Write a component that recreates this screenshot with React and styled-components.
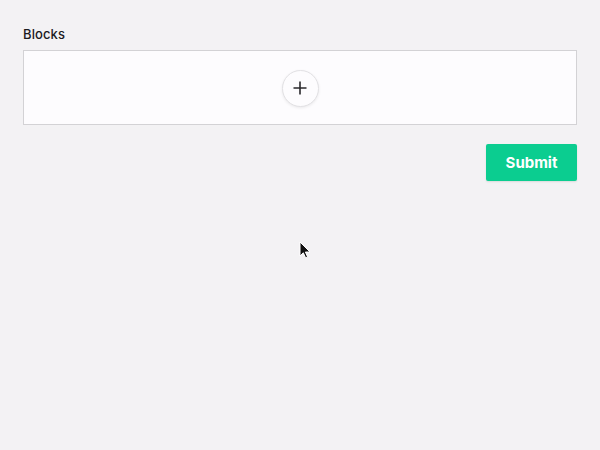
import styled, { createGlobalStyle } from 'styled-components'

const GlobalStyle = createGlobalStyle`
    html, body {
        margin: 0;
        padding: 0;
        background: #f3f2f4;
        font-family: Inter, 'Noto Sans', sans-serif;
        color: #1c1b1f;
    }
`

const Page = styled.div`
    position: relative;
    width: 600px;
    height: 450px;
    box-sizing: border-box;
    padding: 26px 23px 0 23px;
    display: flex;
    flex-direction: column;
`

const Label = styled.div`
    font-size: 13px;
    font-weight: 500;
    line-height: 16px;
    margin-bottom: 8px;
    letter-spacing: 0.1px;
`

const BlockArea = styled.div`
    height: 75px;
    box-sizing: border-box;
    background: #fdfcfe;
    border: 1px solid #d3d2d5;
    display: flex;
    align-items: center;
    justify-content: center;
`

const AddButton = styled.button`
    width: 37px;
    height: 37px;
    border-radius: 50%;
    border: 1px solid #e2e1e4;
    background: #fdfcfe;
    box-shadow: 0 1px 3px rgba(0, 0, 0, 0.08);
    display: flex;
    align-items: center;
    justify-content: center;
    padding: 0;
    margin-top: 1px;
    color: #2a292c;
`

const Actions = styled.div`
    display: flex;
    justify-content: flex-end;
    margin-top: 19px;
`

const SubmitButton = styled.button`
    width: 91px;
    height: 37px;
    border: none;
    border-radius: 2px;
    background: #0bcd90;
    color: #ffffff;
    font-family: Inter, 'Noto Sans', sans-serif;
    font-size: 15px;
    font-weight: 700;
    box-shadow: 0 1px 2px rgba(0, 0, 0, 0.1);
`

const Cursor = styled.svg`
    position: absolute;
    left: 299px;
    top: 241px;
`

export default function App() {
    return (
        <>
            <GlobalStyle />
            <Page>
                <Label>Blocks</Label>
                <BlockArea>
                    <AddButton aria-label="Add block">
                        <svg width="16" height="16" viewBox="0 0 16 16">
                            <path d="M8 1.5v13M1.5 8h13" stroke="currentColor" strokeWidth="1.6" />
                        </svg>
                    </AddButton>
                </BlockArea>
                <Actions>
                    <SubmitButton>Submit</SubmitButton>
                </Actions>
                <Cursor width="12" height="18" viewBox="0 0 12 18">
                    <path d="M1 1v14l3.3-3.2 2.3 5 2-0.9-2.2-4.9H11z" fill="#111" stroke="#fff" strokeWidth="1" />
                </Cursor>
            </Page>
        </>
    )
}
